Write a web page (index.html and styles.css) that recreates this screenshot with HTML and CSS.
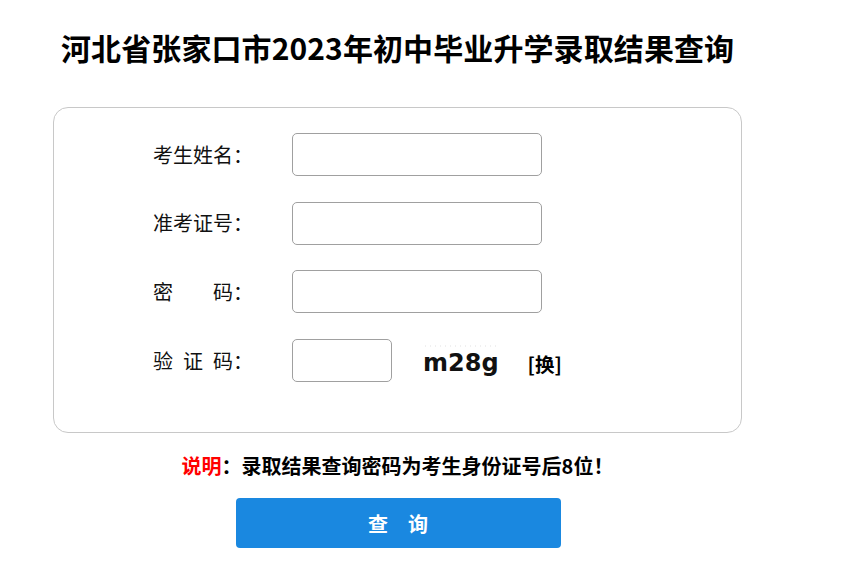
FILE: index.html
```html
<!DOCTYPE html>
<html lang="zh-CN">
<head>
    <meta charset="UTF-8">
    <meta name="viewport" content="width=device-width, initial-scale=1.0">
    <title>录取结果查询</title>
    <link rel="stylesheet" href="styles.css">
</head>
<body>
    <div class="wrap">
        <h1 class="titulo">河北省张家口市2023年初中毕业升学录取结果查询</h1>

        <form class="cuadro" onsubmit="return false;">
            <div class="fila">
                <label for="xm">考生姓名：</label>
                <input type="text" id="xm" class="campo">
            </div>
            <div class="fila">
                <label for="zkzh">准考证号：</label>
                <input type="text" id="zkzh" class="campo">
            </div>
            <div class="fila">
                <label for="mm">密　　码：</label>
                <input type="password" id="mm" class="campo">
            </div>
            <div class="fila">
                <label for="yzm">验&ensp;证&ensp;码：</label>
                <input type="text" id="yzm" class="campo corto">
                <span class="captcha">m28g</span>
                <a href="#" class="cambiar">[换]</a>
            </div>
        </form>

        <p class="nota"><span class="rojo">说明</span>：录取结果查询密码为考生身份证号后8位！</p>

        <div class="acciones">
            <button type="button" class="boton">查　询</button>
        </div>
    </div>
</body>
</html>
```

FILE: styles.css
```css
body {
    font-family: "Noto Sans CJK SC", "Noto Sans", sans-serif;
    margin: 0;
    padding: 0;
    background-color: #fff;
    color: #000;
}
.wrap {
    width: 689px;
    margin-left: 53px;
}
.titulo {
    margin: 0;
    padding: 27px 0 0 8px;
    font-size: 30px;
    line-height: 40px;
    font-weight: bold;
    letter-spacing: 0.1px;
}
.cuadro {
    margin: 40px 0 0 0;
    border: 1px solid #c8c8c8;
    border-radius: 15px;
    padding: 25px 0 50px 99px;
    display: flex;
    flex-direction: column;
    gap: 25.7px;
}
.fila {
    display: flex;
    align-items: center;
    height: 43px;
}
.fila label {
    width: 139px;
    font-size: 20px;
    line-height: 28px;
    color: #111;
}
.campo {
    box-sizing: border-box;
    width: 250px;
    height: 43px;
    border: 1px solid #a0a0a0;
    border-radius: 5px;
    padding: 0 8px;
    font-size: 16px;
    outline: none;
}
.campo.corto {
    width: 100px;
}
.captcha {
    margin-left: 31px;
    font-family: "DejaVu Sans", sans-serif;
    font-weight: bold;
    font-size: 24px;
    line-height: 30px;
    color: #111;
    padding-top: 4px;
    background-image: radial-gradient(circle, #f0f0f0 1px, transparent 1px);
    background-size: 5px 4px;
    background-repeat: repeat-x;
    background-position: 0 0;
}
.cambiar {
    margin-left: 29px;
    font-size: 19.5px;
    font-weight: bold;
    color: #000;
    text-decoration: none;
    padding-top: 6px;
}
.nota {
    margin: 19px 0 0 0;
    text-align: center;
    font-size: 20px;
    line-height: 28px;
    font-weight: bold;
}
.rojo {
    color: #ff0000;
}
.acciones {
    margin-top: 18px;
    padding-left: 1px;
    display: flex;
    justify-content: center;
}
.boton {
    width: 325px;
    height: 50px;
    background-color: #1a88e0;
    color: #fff;
    border: none;
    border-radius: 4px;
    font-family: "Noto Sans CJK SC", sans-serif;
    font-size: 20px;
    font-weight: bold;
    cursor: pointer;
}
```
